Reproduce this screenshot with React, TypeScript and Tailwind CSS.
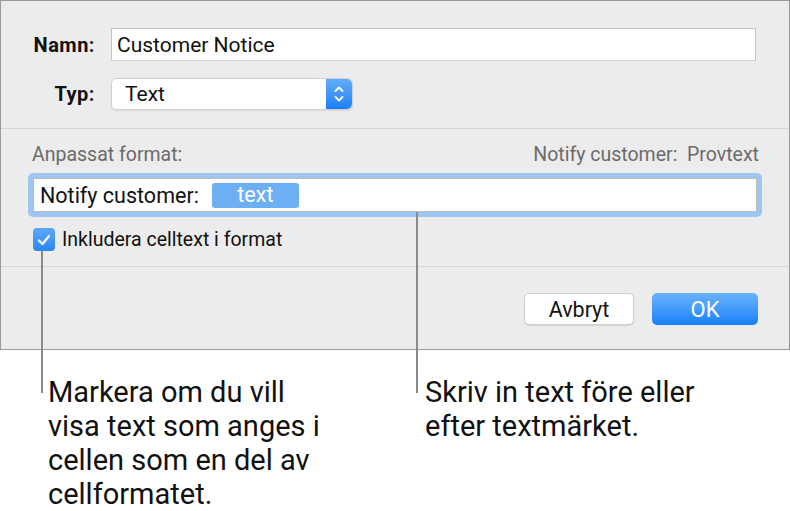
const FONT = { fontFamily: "Roboto, 'Noto Sans', sans-serif" };

const Stepper = () => (
  <div className="w-[26px] h-full rounded-r-[5px] bg-gradient-to-b from-[#62acfa] to-[#1a7ff9] flex items-center justify-center">
    <svg width="12" height="20" viewBox="0 0 12 20" fill="none">
      <path d="M2.5 7 L6 3.5 L9.5 7" stroke="white" strokeWidth="1.8" strokeLinecap="round" strokeLinejoin="round" />
      <path d="M2.5 13 L6 16.5 L9.5 13" stroke="white" strokeWidth="1.8" strokeLinecap="round" strokeLinejoin="round" />
    </svg>
  </div>
);

const Checkbox = () => (
  <div className="w-[22px] h-[23px] rounded-[4px] bg-gradient-to-b from-[#5aa8f8] to-[#2a86f6] flex items-center justify-center">
    <svg width="14" height="12" viewBox="0 0 14 12" fill="none">
      <path d="M2 6.5 L5.5 10 L12 2" stroke="white" strokeWidth="2.2" strokeLinecap="round" strokeLinejoin="round" />
    </svg>
  </div>
);

const App = () => {
  return (
    <div className="w-[790px] h-[511px] bg-white relative overflow-hidden text-[#111]" style={FONT}>
      {/* dialog */}
      <div className="h-[350px] border border-[#999] bg-[#ececec] flex flex-col">
        <div className="pt-[27px] pb-[18px] border-b border-[#d6d6d6] flex flex-col gap-[17px]">
          <div className="flex items-center h-[33px]">
            <span className="w-[94px] text-right text-[20px] font-bold tracking-[0.5px]">Namn:</span>
            <div className="ml-[16px] w-[645px] h-full bg-white border border-[#c4c4c4] border-b-[#d4d4d4] flex items-center pl-[5px] pt-[2px] text-[21px]">
              Customer Notice
            </div>
          </div>
          <div className="flex items-center h-[32px]">
            <span className="w-[94px] text-right text-[20px] font-bold tracking-[0.5px]">Typ:</span>
            <div className="ml-[16px] w-[242px] h-full bg-white rounded-[5px] border border-[#d0d0d0] shadow-[0_1px_1px_rgba(0,0,0,0.08)] flex items-center">
              <span className="flex-1 pl-[13px] pt-[2px] text-[21px]">Text</span>
              <Stepper />
            </div>
          </div>
        </div>

        <div className="pt-[15px] pb-[15px] px-[27px] border-b border-[#d6d6d6] flex flex-col">
          <div className="h-[22px] flex items-center justify-between px-[4px] text-[19.5px] text-[#6b6b6b]">
            <span>Anpassat format:</span>
            <span className="-mr-[1px]">Notify customer:&nbsp; Provtext</span>
          </div>
          <div className="mt-[7px] h-[44px] w-[734px] rounded-[5px] bg-[#9ec6f3] p-[5px]">
            <div className="h-full bg-white border border-[#bdbdbd] flex items-center pl-[6px] text-[21.5px]">
              <span className="pt-[2px]">Notify customer:</span>
              <span className="ml-[13px] w-[87px] h-[25px] rounded-[3px] bg-[#6caff2] text-white flex items-center justify-center">
                text
              </span>
            </div>
          </div>
          <div className="mt-[11px] h-[23px] flex items-center pl-[5px]">
            <Checkbox />
            <span className="ml-[7px] text-[19.5px]">Inkludera celltext i format</span>
          </div>
        </div>

        <div className="flex-1 pt-[26px] pr-[31px] flex justify-end gap-[18px]">
          <button className="w-[110px] h-[32px] rounded-[5px] bg-white border border-[#cfcfcf] shadow-[0_1px_1px_rgba(0,0,0,0.1)] text-[21.5px]">
            Avbryt
          </button>
          <button className="w-[106px] h-[32px] rounded-[5px] bg-gradient-to-b from-[#69b2fb] to-[#1480fb] text-white text-[22px]">
            OK
          </button>
        </div>
      </div>

      {/* callout text */}
      <div className="flex pt-[25px] text-[29px] leading-[34px] text-[#111]">
        <p className="ml-[48px] w-[300px]">
          Markera om du vill
          <br />
          visa text som anges i
          <br />
          cellen som en del av
          <br />
          cellformatet.
        </p>
        <p className="ml-[77px]">
          Skriv in text före eller
          <br />
          efter textmärket.
        </p>
      </div>

      {/* callout lines */}
      <div className="absolute left-[41px] top-[251px] w-[2px] h-[142px] bg-[#8a8a8a]" />
      <div className="absolute left-[416px] top-[212px] w-[2px] h-[181px] bg-[#8a8a8a]" />
    </div>
  );
};

export default App;
